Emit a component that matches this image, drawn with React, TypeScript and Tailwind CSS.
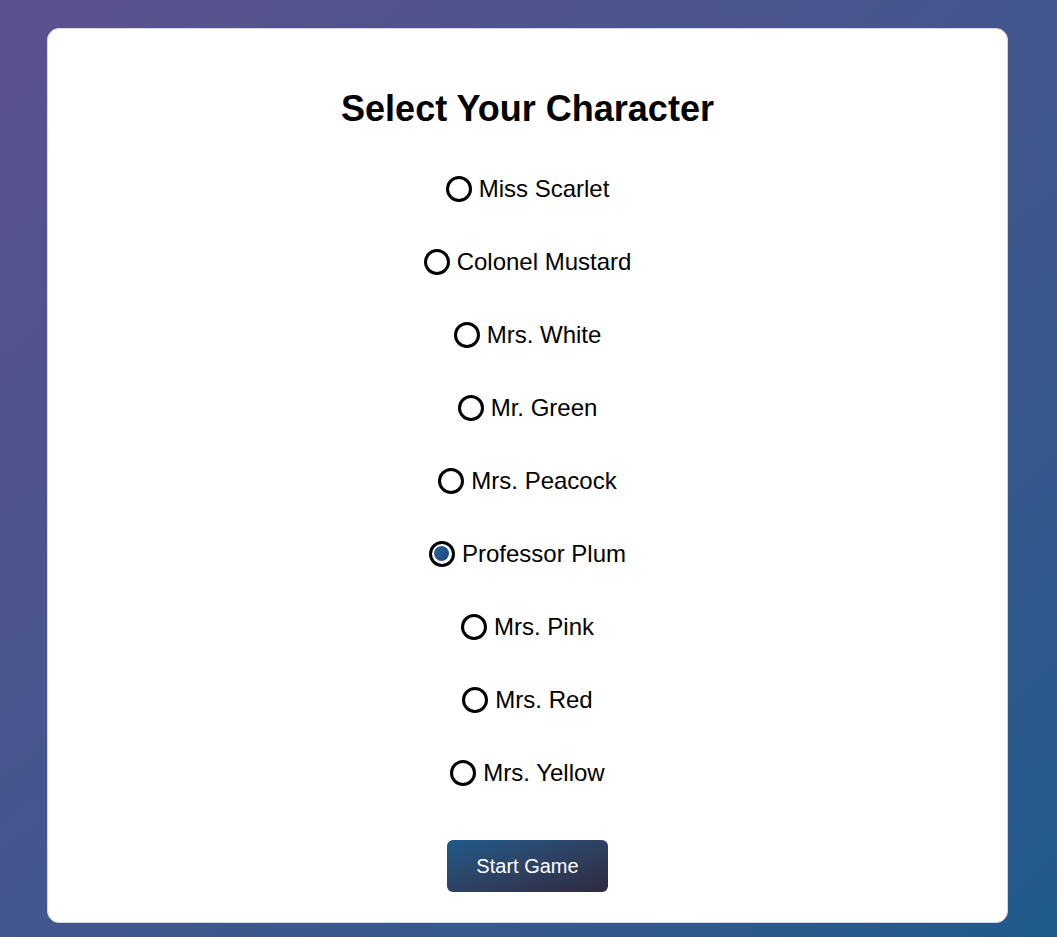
import { useState } from 'react'

const characters = [
  'Miss Scarlet',
  'Colonel Mustard',
  'Mrs. White',
  'Mr. Green',
  'Mrs. Peacock',
  'Professor Plum',
  'Mrs. Pink',
  'Mrs. Red',
  'Mrs. Yellow',
]

export default function App() {
  const [selected, setSelected] = useState('Professor Plum')

  return (
    <div
      className="min-h-screen bg-gradient-to-br from-[#5b518f] to-[#1f5a8c] pt-[28px] pb-[14px]"
      style={{ fontFamily: '"Liberation Sans", Arial, sans-serif' }}
    >
      <div className="ml-[47px] w-[961px] h-[895px] bg-white rounded-[12px] border border-[#d6d6de] pt-[59px] flex flex-col items-center">
        <h2 className="text-[36px] leading-[41px] font-bold text-black">Select Your Character</h2>

        {/* Character options */}
        <div className="mt-[23px] flex flex-col items-center">
          {characters.map((name) => (
            <label
              key={name}
              className="h-[73px] flex items-center gap-[7px] cursor-pointer text-[24px] text-black"
              onClick={() => setSelected(name)}
            >
              <span className="w-[26px] h-[26px] rounded-full border-[3px] border-black flex items-center justify-center">
                {selected === name && (
                  <span className="w-[15px] h-[15px] rounded-full bg-gradient-to-br from-[#2c62a0] to-[#1d4878]" />
                )}
              </span>
              <span>{name}</span>
            </label>
          ))}
        </div>

        <button className="mt-[31px] w-[161px] h-[52px] rounded-[6px] bg-gradient-to-br from-[#1e5a8a] to-[#2f2a3f] text-white text-[20px]">
          Start Game
        </button>
      </div>
    </div>
  )
}
